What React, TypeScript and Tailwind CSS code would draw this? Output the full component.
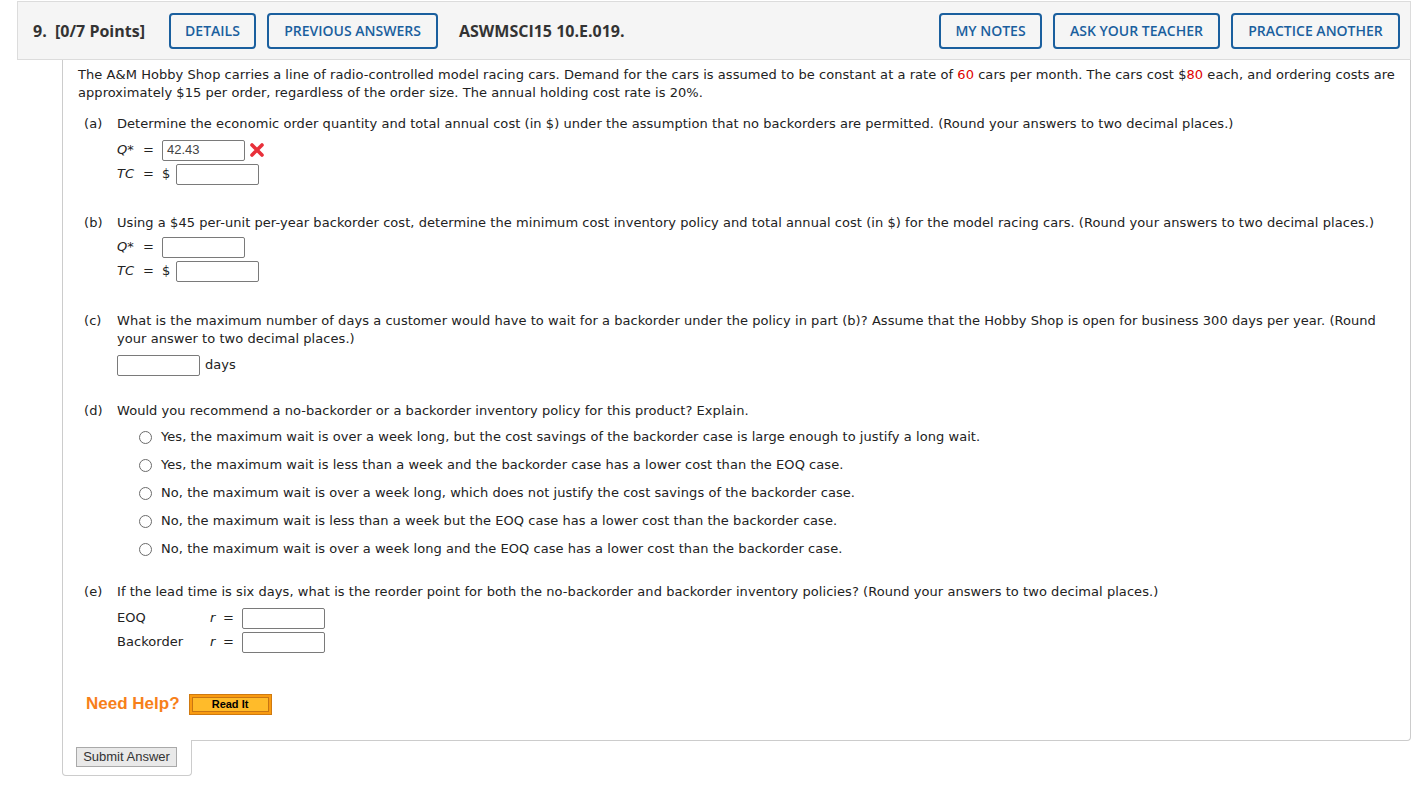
import React from 'react';

const body = { fontFamily: '"DejaVu Sans", Verdana, sans-serif' };
const head = { fontFamily: '"Open Sans", "Liberation Sans", sans-serif' };
const arial = { fontFamily: '"Liberation Sans", Arial, sans-serif' };

function HeadButton({ label, w }: { label: string; w: string }) {
  return (
    <button
      className={`${w} h-[36px] rounded-[4px] border-2 border-[#1a5f9e] bg-[#f5f5f5] text-[14px] font-semibold text-[#1a5f9e]`}
      style={head}
    >
      {label}
    </button>
  );
}

function Box({ value = '' }: { value?: string }) {
  return (
    <div className="flex h-[21px] w-[83px] items-center rounded-[2px] border border-[#7a7a7a] bg-white pl-[4px] text-[13px] tracking-normal text-[#444]" style={arial}>
      {value}
    </div>
  );
}

function WrongMark() {
  return (
    <svg width="16" height="16" viewBox="0 0 16 16" className="ml-[4px]">
      <path d="M3 3 L13 13 M13 3 L3 13" stroke="#e8303a" strokeWidth="3.6" strokeLinecap="round" />
    </svg>
  );
}

function Part({ tag, children }: { tag: string; children: React.ReactNode }) {
  return (
    <div className="flex pl-[6px]">
      <span className="w-[33px] shrink-0">{tag}</span>
      <div className="flex-1">{children}</div>
    </div>
  );
}

function EqRow({ name, dollar, value, wrong }: { name: string; dollar?: boolean; value?: string; wrong?: boolean }) {
  return (
    <div className="flex h-[24px] items-center">
      <span className="w-[26px] italic">{name}</span>
      <span className="w-[19px]">=</span>
      {dollar && <span className="w-[14px]">$</span>}
      <Box value={value} />
      {wrong && <WrongMark />}
    </div>
  );
}

const options = [
  'Yes, the maximum wait is over a week long, but the cost savings of the backorder case is large enough to justify a long wait.',
  'Yes, the maximum wait is less than a week and the backorder case has a lower cost than the EOQ case.',
  'No, the maximum wait is over a week long, which does not justify the cost savings of the backorder case.',
  'No, the maximum wait is less than a week but the EOQ case has a lower cost than the backorder case.',
  'No, the maximum wait is over a week long and the EOQ case has a lower cost than the backorder case.',
];

export default function App() {
  return (
    <div className="min-h-[786px] bg-white pt-[1px] text-[#222]">
      {/* Header */}
      <div className="ml-[17px] flex h-[59px] w-[1394px] items-center border border-[#dcdcdc] bg-[#f5f5f5]" style={head}>
        <span className="ml-[15px] w-[136px] text-[16px] font-bold text-[#333]">9.&nbsp;&nbsp;[0/7 Points]</span>
        <HeadButton label="DETAILS" w="w-[87px]" />
        <div className="w-[11px]" />
        <HeadButton label="PREVIOUS ANSWERS" w="w-[171px]" />
        <span className="ml-[21px] text-[16px] font-bold text-[#333]">ASWMSCI15 10.E.019.</span>
        <div className="flex-1" />
        <div className="mr-[10px] flex gap-[11px]">
          <HeadButton label="MY NOTES" w="w-[103px]" />
          <HeadButton label="ASK YOUR TEACHER" w="w-[167px]" />
          <HeadButton label="PRACTICE ANOTHER" w="w-[169px]" />
        </div>
      </div>

      {/* Question body */}
      <div className="ml-[62px] w-[1349px] rounded-br-[4px] border-b border-l border-r border-[#cccccc] pl-[15px] pr-[15px] pt-[6px] pb-[25px] text-[13px] leading-[18px] tracking-[0.055px]" style={body}>
        <p>
          The A&amp;M Hobby Shop carries a line of radio-controlled model racing cars. Demand for the cars is assumed to be constant at a rate of{' '}
          <span className="text-[#e00000]">60</span> cars per month. The cars cost $<span className="text-[#e00000]">80</span> each, and ordering costs are
          approximately $15 per order, regardless of the order size. The annual holding cost rate is 20%.
        </p>

        <div className="mt-[13px]">
          <Part tag="(a)">
            <p>Determine the economic order quantity and total annual cost (in $) under the assumption that no backorders are permitted. (Round your answers to two decimal places.)</p>
            <div className="mt-[5px]">
              <EqRow name="Q*" value="42.43" wrong />
              <EqRow name="TC" dollar />
            </div>
          </Part>
        </div>

        <div className="mt-[28px]">
          <Part tag="(b)">
            <p>Using a $45 per-unit per-year backorder cost, determine the minimum cost inventory policy and total annual cost (in $) for the model racing cars. (Round your answers to two decimal places.)</p>
            <div className="mt-[3px]">
              <EqRow name="Q*" />
              <EqRow name="TC" dollar />
            </div>
          </Part>
        </div>

        <div className="mt-[29px]">
          <Part tag="(c)">
            <p>What is the maximum number of days a customer would have to wait for a backorder under the policy in part (b)? Assume that the Hobby Shop is open for business 300 days per year. (Round your answer to two decimal places.)</p>
            <div className="mt-[5px] flex h-[24px] items-center gap-[5px]">
              <Box />
              <span>days</span>
            </div>
          </Part>
        </div>

        <div className="mt-[25px]">
          <Part tag="(d)">
            <p>Would you recommend a no-backorder or a backorder inventory policy for this product? Explain.</p>
            <div className="mt-[3px] pl-[22px]">
              {options.map((o) => (
                <div key={o} className="flex h-[28px] items-center">
                  <span className="mr-[9px] h-[13px] w-[13px] rounded-full border border-[#6b6b6b] bg-white" />
                  <span>{o}</span>
                </div>
              ))}
            </div>
          </Part>
        </div>

        <div className="mt-[20px]">
          <Part tag="(e)">
            <p>If the lead time is six days, what is the reorder point for both the no-backorder and backorder inventory policies? (Round your answers to two decimal places.)</p>
            <div className="mt-[5px]">
              {['EOQ', 'Backorder'].map((n) => (
                <div key={n} className="flex h-[24px] items-center">
                  <span className="w-[93px]">{n}</span>
                  <span className="w-[13px] italic">r</span>
                  <span className="w-[19px]">=</span>
                  <Box />
                </div>
              ))}
            </div>
          </Part>
        </div>

        <div className="mt-[39px] flex h-[22px] items-center pl-[8px] tracking-normal" style={arial}>
          <span className="text-[17px] font-bold text-[#f7801a]">Need Help?</span>
          <div className="ml-[9px] flex h-[21px] w-[83px] items-center justify-center border border-[#d07a10] bg-[#f99b10] p-[2px]">
            <div className="flex h-full w-full items-center justify-center border border-[#c87512] bg-[#ffbb2a] text-[11px] font-bold text-black">
              Read It
            </div>
          </div>
        </div>
      </div>

      {/* Submit tab */}
      <div className="-mt-[1px] ml-[62px] flex h-[36px] w-[130px] items-start rounded-b-[4px] border-b border-l border-r border-[#cccccc] bg-white pl-[13px] pt-[7px]" style={arial}>
        <button className="h-[20px] w-[101px] border border-[#a9a9a9] bg-[#e9e9e9] text-[13px] leading-[18px] text-[#333]">Submit Answer</button>
      </div>
    </div>
  );
}
